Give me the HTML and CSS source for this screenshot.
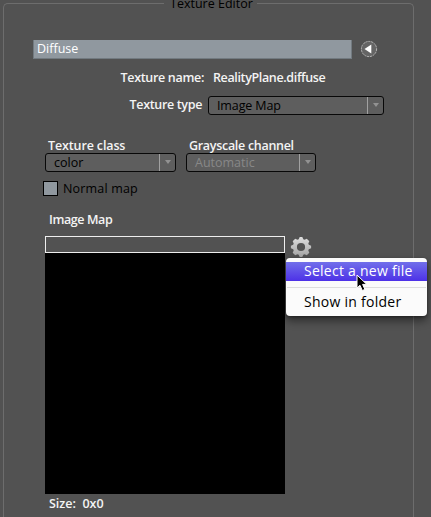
FILE: index.html
```html
<!DOCTYPE html>
<html lang="en">
<head>
<meta charset="utf-8">
<title>Texture Editor</title>
<link rel="stylesheet" href="styles.css">
</head>
<body>
<main class="editor">
  <header class="heading"><i class="rule left"></i><h1><span class="t-title">Texture Editor</span></h1><i class="rule right"></i></header>
  <div class="content">
    <div class="channel">
      <div class="channel-name"><span class="t-diffuse">Diffuse</span></div>
      <svg class="back" viewBox="0 0 18 18"><circle cx="9" cy="9" r="7.6" fill="#656565" stroke="#b5b5b5" stroke-width="1" stroke-dasharray="2.2 .7"/><path d="M4.500 9 11.300 4.500v9z" fill="#fff"/></svg>
    </div>
    <div class="row name"><b class="label"><span class="t-name">Texture name:</span></b><b class="value"><span class="t-value">RealityPlane.diffuse</span></b></div>
    <div class="row type"><b class="label"><span class="t-type">Texture type</span></b><div class="select wide"><span class="t-map">Image Map</span><i class="arrow"></i></div></div>
    <div class="classes">
      <div class="field class"><b><span class="t-class">Texture class</span></b><div class="select"><span class="t-color">color</span><i class="arrow"></i></div></div>
      <div class="field gray"><b><span class="t-gray">Grayscale channel</span></b><div class="select disabled"><span class="t-auto">Automatic</span><i class="arrow"></i></div></div>
    </div>
    <label class="check"><i class="box"></i><span class="t-normal">Normal map</span></label>
    <b class="map-label"><span class="t-image">Image Map</span></b>
    <div class="map">
      <div class="path"></div>
      <svg class="gear" viewBox="0 0 22 22">
        <defs><linearGradient id="metal" x2="0" y2="1"><stop stop-color="#dedede"/><stop offset="1" stop-color="#a2a2a2"/></linearGradient></defs>
        <path fill="url(#metal)" fill-rule="evenodd" d="M8.700 3.200 9.700.9h2.600l1 2.300 1.200.5 2.300-1L19.300 5.200 18.300 7.500 18.800 8.700 21.100 9.700V12.300L18.800 13.300 18.300 14.500 19.300 16.800 16.800 19.300 14.500 18.300 13.300 18.800 12.300 21.100H9.700L8.700 18.800 7.500 18.300 5.200 19.300 2.700 16.800 3.700 14.500 3.200 13.300.9 12.300V9.700L3.200 8.700 3.700 7.500 2.700 5.200 5.200 2.700 7.500 3.700ZM11 6.900a4.100 4.100 0 1 0 0 8.200a4.100 4.100 0 1 0 0-8.200Z"/>
      </svg>
      <div class="menu">
        <div class="item selected"><span class="t-select">Select a new file</span></div>
        <hr>
        <div class="item"><span class="t-show">Show in folder</span></div>
        <svg class="cursor" viewBox="0 0 12 18"><path d="M1 1v13l3-2.700 2.300 5.200 2.600-1.100-2.300-5h4.200z" fill="#000" stroke="#fff" stroke-width="1"/></svg>
      </div>
    </div>
    <div class="preview"></div>
    <b class="size"><span class="t-size">Size:&nbsp; 0x0</span></b>
  </div>
</main>
</body>
</html>
```
FILE: styles.css
```css
* { box-sizing: border-box; }
body { margin: 0; width: 431px; height: 517px; overflow: hidden; background: #525252; color: #000; font: 12.5px/18px "Open Sans", "Noto Sans", sans-serif; }
b { color: #f4f4f4; font-weight: 600; display: block; }
span { white-space: nowrap; }
.editor { width: 411px; height: 517px; margin-left: 3px; }
.heading { display: flex; height: 12px; }
.rule { margin-top: 3px; border-top: 1px solid #6d6d6d; height: 9px; }
.left { width: 161px; border-left: 1px solid #6d6d6d; border-radius: 5px 0 0; }
.right { flex: 1; border-right: 1px solid #6d6d6d; border-radius: 0 5px 0 0; }
h1 { margin: -5px 0 0; width: 93px; padding-left: 6px; font-size: 12.5px; font-weight: 400; line-height: 18px; }
.content { height: 505px; border: solid #6d6d6d; border-width: 0 1px; padding: 28px 0 0 29px; }
.channel { display: flex; height: 19px; align-items: center; gap: 8px; }
.channel-name { width: 319px; height: 19px; padding-left: 3px; background: #90989f; border: 1px solid #727a80; border-width: 0 1px 1px; color: #fff; line-height: 18px; }
.back { width: 18px; height: 18px; margin-top: -1px; }
.row { display: flex; }
.name { margin-top: 10px; gap: 9px; height: 18px; }
.name .label { width: 171px; text-align: right; }
.type { margin-top: 9px; gap: 6px; height: 19px; }
.type .label { width: 169px; text-align: right; line-height: 17px; }
.select { display: flex; width: 131px; height: 19px; padding-left: 8px; border: 1px solid #080808; border-radius: 3px; background: #5e5e5e; justify-content: space-between; line-height: 17px; }
.wide { width: 176px; }
.arrow { width: 16px; border-left: 1px solid #a1a1a1; display: flex; align-items: flex-start; justify-content: center; }
.arrow::before { content: ""; margin-top: 6px; border: solid transparent; border-width: 4px 3px 0; border-top-color: #929292; }
.disabled { width: 130px; color: #888; }
.classes { display: flex; margin: 22px 0 0 12px; gap: 10px; height: 35px; }
.field b { height: 16px; padding-left: 3px; line-height: 17px; }
.check { display: flex; align-items: center; gap: 5px; margin: 9px 0 0 10px; height: 15px; }
.box { width: 15px; height: 15px; background: #90989f; border: 1px solid #000; }
.map-label { margin: 15px 0 0 16px; height: 18px; }
.map { position: relative; display: flex; gap: 5px; height: 17px; margin: 7px 0 0 12px; }
.path { width: 240px; height: 17px; border: 1px solid #eee; }
.gear { width: 22px; height: 22px; }
.menu { position: absolute; left: 241px; top: 22px; width: 141px; height: 58px; padding-top: 4px; background: #fbfbfb; border-radius: 4px; box-shadow: 0 5px 9px rgba(0,0,0,.45), 0 1px 3px rgba(0,0,0,.35); }
.item { height: 19px; padding-left: 18px; font-size: 14px; line-height: 18px; }
.selected { background: linear-gradient(#716fea, #4d31e7); color: #fff; font-weight: 500; }
hr { margin: 6px 1px 5px; border: 0; border-top: 1px solid #dedede; }
.cursor { position: absolute; left: 70px; top: 16px; width: 12px; height: 18px; }
.preview { width: 240px; height: 241px; margin-left: 12px; background: #000; }
.size { margin: 1px 0 0 16px; }
.t-name { letter-spacing: -.32px; }
.t-value { letter-spacing: -.36px; }
.t-type { letter-spacing: -.34px; }
.t-map { letter-spacing: -.12px; }
.t-class { letter-spacing: -.13px; }
.t-gray { letter-spacing: -.3px; }
.t-normal { letter-spacing: .18px; }
.t-image { letter-spacing: -.4px; }
.t-select, .t-show { letter-spacing: .26px; }
```
